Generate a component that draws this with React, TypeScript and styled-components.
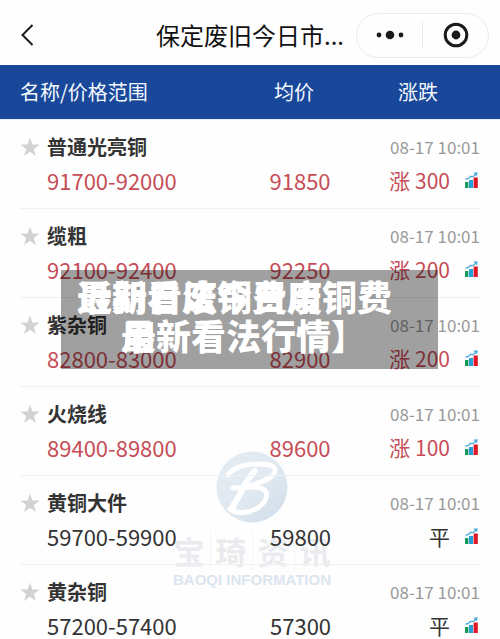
import React from "react";
import styled, { createGlobalStyle } from "styled-components";

const GlobalStyle = createGlobalStyle`
  * { box-sizing: border-box; }
  html { scrollbar-width: none; }
  body {
    margin: 0;
    background: #fefefe;
    color: #333;
    font-family: "Noto Sans CJK SC", "Noto Sans", sans-serif;
  }
`;

const Screen = styled.main`
  position: relative;
  min-height: 100vh;
  overflow: hidden;
`;

const NavBar = styled.header`
  display: grid;
  grid-template-columns: 1fr auto 1fr;
  align-items: center;
  height: 65px;
  padding: 5px 11px 0;
`;

const IconButton = styled.button`
  display: flex;
  align-items: center;
  justify-content: center;
  flex: 1;
  height: 100%;
  padding: 0;
  border: 0;
  background: none;
  color: #1a1a1a;
`;

const BackButton = styled(IconButton)`
  justify-self: start;
  width: 32px;
  height: 44px;
`;

const PageTitle = styled.h1`
  margin: 0;
  color: #111;
  font-size: 24px;
  font-weight: 400;
  line-height: 36px;
  white-space: nowrap;
`;

const Capsule = styled.div`
  display: flex;
  align-items: center;
  justify-self: end;
  width: 133px;
  height: 45px;
  border: 1px solid #ebebeb;
  border-radius: 23px;
`;

const CapsuleDivider = styled.span`
  width: 1px;
  height: 26px;
  background: #ebebeb;
`;

const PriceTable = styled.table`
  display: block;
  width: 100%;
`;

const TableHead = styled.thead`
  display: block;
  padding: 0 20px;
  border-bottom: 1px solid #e6effb;
  background: #19489a;
`;

const TableBody = styled.tbody`
  display: block;
  padding: 0 20px;
`;

const Row = styled.tr`
  display: grid;
  grid-template-columns: 25fr 12fr 9fr;
`;

const PriceRow = styled(Row)`
  padding: 10px 0 11px;
  border-bottom: 1px solid #f0f0f0;
`;

const HeadCell = styled.th<{ $indent?: number }>`
  padding: 0 0 0 ${(p) => p.$indent ?? 0}px;
  color: #f4f8ff;
  font-size: 20px;
  font-weight: 400;
  line-height: 54px;
  text-align: left;
`;

const NameCell = styled.td`
  display: grid;
  grid-template-columns: 27px 1fr;
  padding: 0;
`;

const StarButton = styled.button`
  display: flex;
  align-items: center;
  height: 33px;
  padding: 0;
  border: 0;
  background: none;
  color: #d2d2d2;
`;

const Name = styled.span`
  font-size: 20px;
  font-weight: 700;
  line-height: 33px;
`;

const Price = styled.span<{ $rising: boolean }>`
  grid-column: 2;
  color: ${(p) => (p.$rising ? "#c64d57" : "#333")};
  font-size: 22px;
  line-height: 34px;
  white-space: nowrap;
`;

const AverageCell = styled.td`
  align-self: end;
  display: flex;
  padding: 0;
`;

const ChangeCell = styled.td`
  display: flex;
  flex-direction: column;
  align-items: flex-end;
  padding: 0;
`;

const Time = styled.time`
  color: #999;
  font-size: 17px;
  line-height: 33px;
  white-space: nowrap;
`;

const Change = styled.span<{ $rising: boolean }>`
  display: flex;
  align-items: center;
  gap: 13px;
  color: ${(p) => (p.$rising ? "#c64d57" : "#333")};
  font-size: 21px;
  line-height: 34px;
  white-space: nowrap;
`;

const ChartLink = styled.a`
  display: flex;
`;

const Watermark = styled.div`
  position: absolute;
  z-index: -1;
  top: 451px;
  left: 50%;
  display: flex;
  flex-direction: column;
  align-items: center;
  transform: translateX(-50%);
  margin-left: 2px;
  pointer-events: none;
`;

const WatermarkName = styled.span`
  display: flex;
  margin-top: 8px;
  color: #e9ebee;
  font-size: 31px;
  font-weight: 700;
  line-height: 40px;
`;

const WatermarkGlyph = styled.span`
  & + & {
    margin-left: 5px;
    padding-left: 5px;
    border-left: 1px solid #f3f4f6;
  }
`;

const WatermarkLatin = styled.span`
  color: #dbe5ee;
  font-family: "Liberation Sans", sans-serif;
  font-size: 15px;
  font-weight: 700;
  line-height: 18px;
  white-space: nowrap;
`;

const Banner = styled.div`
  position: absolute;
  z-index: 1;
  top: 270px;
  left: 61px;
  right: 62px;
  display: grid;
  padding: 6px 16px 15px;
  background: rgba(0, 0, 0, 0.37);
  color: #fff;
  font-size: 35px;
  font-weight: 900;
  line-height: 39px;
  white-space: nowrap;
`;

const BannerText = styled.p`
  grid-area: 1 / 1;
  margin: 0;
`;

const BannerLine = styled.span<{ $indent?: number }>`
  display: block;
  padding-left: ${(p) => p.$indent ?? 0}px;
`;

type Quote = { name: string; range: string; average: string; change: string };

const quotes: Quote[] = [
  { name: "普通光亮铜", range: "91700-92000", average: "91850", change: "涨 300" },
  { name: "缆粗", range: "92100-92400", average: "92250", change: "涨 200" },
  { name: "紫杂铜", range: "82800-83000", average: "82900", change: "涨 200" },
  { name: "火烧线", range: "89400-89800", average: "89600", change: "涨 100" },
  { name: "黄铜大件", range: "59700-59900", average: "59800", change: "平" },
  { name: "黄杂铜", range: "57200-57400", average: "57300", change: "平" },
];

const BackIcon = () => (
  <svg width="14" height="22" viewBox="0 0 14 22" fill="none" stroke="#1a1a1a" strokeWidth="2">
    <path d="M12.5 1 2.5 11l10 10" />
  </svg>
);

const MoreIcon = () => (
  <svg width="28" height="10" viewBox="0 0 28 10" fill="#1a1a1a">
    <circle cx="3" cy="5" r="2.4" />
    <circle cx="14" cy="5" r="4.3" />
    <circle cx="25" cy="5" r="2.4" />
  </svg>
);

const CloseIcon = () => (
  <svg width="26" height="26" viewBox="0 0 26 26">
    <circle cx="13" cy="13" r="10.8" fill="none" stroke="#1a1a1a" strokeWidth="3" />
    <circle cx="13" cy="13" r="4.4" fill="#1a1a1a" />
  </svg>
);

const StarIcon = () => (
  <svg width="20" height="20" viewBox="0 0 20 20" fill="currentColor">
    <path d="m10 .5 2.4 6.9 7.2.1-5.8 4.4 2.1 7L10 14.8l-5.9 4.1 2.1-7L.4 7.5l7.2-.1z" />
  </svg>
);

const ChartIcon = () => (
  <svg width="17" height="18" viewBox="-1 0 17 18">
    <rect x="1" y="11" width="3.4" height="6" fill="#159a5b" />
    <rect x="5" y="9" width="4" height="8" fill="#259ed8" />
    <rect x="9.6" y="6.5" width="4.2" height="10.5" fill="#e01528" />
    <path d="M1.5 8.2C4 8 5.5 7.2 6.5 5.2c1.5 1 4 .4 5.5-2.6" fill="none" stroke="#4aa9dc" strokeWidth="1.2" />
    <path d="m9.3 1.8 4.4-.6-.7 4z" fill="#4aa9dc" />
  </svg>
);

const BrandMark = () => (
  <svg width="72" height="72" viewBox="0 0 72 72">
    <defs>
      <linearGradient id="brand" x1="0" y1="0" x2="1" y2="1">
        <stop offset="0" stopColor="#e4ecf3" />
        <stop offset="0.55" stopColor="#e0e9f1" />
        <stop offset="1" stopColor="#cddbe8" />
      </linearGradient>
    </defs>
    <circle cx="36" cy="36" r="35.5" fill="url(#brand)" />
    <g fill="none" stroke="#fff" strokeLinecap="round" strokeLinejoin="round">
      <path d="M12 24c6-8 18-11 32-11 11 0 16 3 15 7-1 6-12 11-26 15" strokeWidth="5" />
      <path d="M17 37c10 0 22-3 30 1 6 4 4 12-4 18-9 6-21 8-29 2" strokeWidth="5" />
      <path d="M39 20C30 28 27 39 20 50c-3 4-4 8-2 10" strokeWidth="6" />
    </g>
  </svg>
);

export default function App() {
  return (
    <>
      <GlobalStyle />
      <Screen>
        <NavBar>
          <BackButton aria-label="返回">
            <BackIcon />
          </BackButton>
          <PageTitle>保定废旧今日市...</PageTitle>
          <Capsule>
            <IconButton aria-label="更多">
              <MoreIcon />
            </IconButton>
            <CapsuleDivider />
            <IconButton aria-label="关闭">
              <CloseIcon />
            </IconButton>
          </Capsule>
        </NavBar>

        <PriceTable>
          <TableHead>
            <Row>
              <HeadCell scope="col">名称/价格范围</HeadCell>
              <HeadCell scope="col" $indent={4}>均价</HeadCell>
              <HeadCell scope="col" $indent={8}>涨跌</HeadCell>
            </Row>
          </TableHead>
          <TableBody>
            {quotes.map((q) => {
              const rising = q.change.startsWith("涨");
              return (
                <PriceRow key={q.name}>
                  <NameCell>
                    <StarButton aria-label={`收藏${q.name}`}>
                      <StarIcon />
                    </StarButton>
                    <Name>{q.name}</Name>
                    <Price $rising={rising}>{q.range}</Price>
                  </NameCell>
                  <AverageCell>
                    <Price $rising={rising}>{q.average}</Price>
                  </AverageCell>
                  <ChangeCell>
                    <Time>08-17 10:01</Time>
                    <Change $rising={rising}>
                      {q.change}
                      <ChartLink href="#trend" aria-label={`${q.name}走势`}>
                        <ChartIcon />
                      </ChartLink>
                    </Change>
                  </ChangeCell>
                </PriceRow>
              );
            })}
          </TableBody>
        </PriceTable>

        <Watermark aria-hidden="true">
          <BrandMark />
          <WatermarkName>
            <WatermarkGlyph>宝</WatermarkGlyph>
            <WatermarkGlyph>琦</WatermarkGlyph>
            <WatermarkGlyph>资</WatermarkGlyph>
            <WatermarkGlyph>讯</WatermarkGlyph>
          </WatermarkName>
          <WatermarkLatin>BAOQI INFORMATION</WatermarkLatin>
        </Watermark>

        <Banner>
          <BannerText>
            <BannerLine>最新看法今日废铜费</BannerLine>
            <BannerLine $indent={44}>用</BannerLine>
          </BannerText>
          <BannerText>
            <BannerLine>近期日废铜费用</BannerLine>
            <BannerLine $indent={44}>最新看法行情】</BannerLine>
          </BannerText>
        </Banner>
      </Screen>
    </>
  );
}
